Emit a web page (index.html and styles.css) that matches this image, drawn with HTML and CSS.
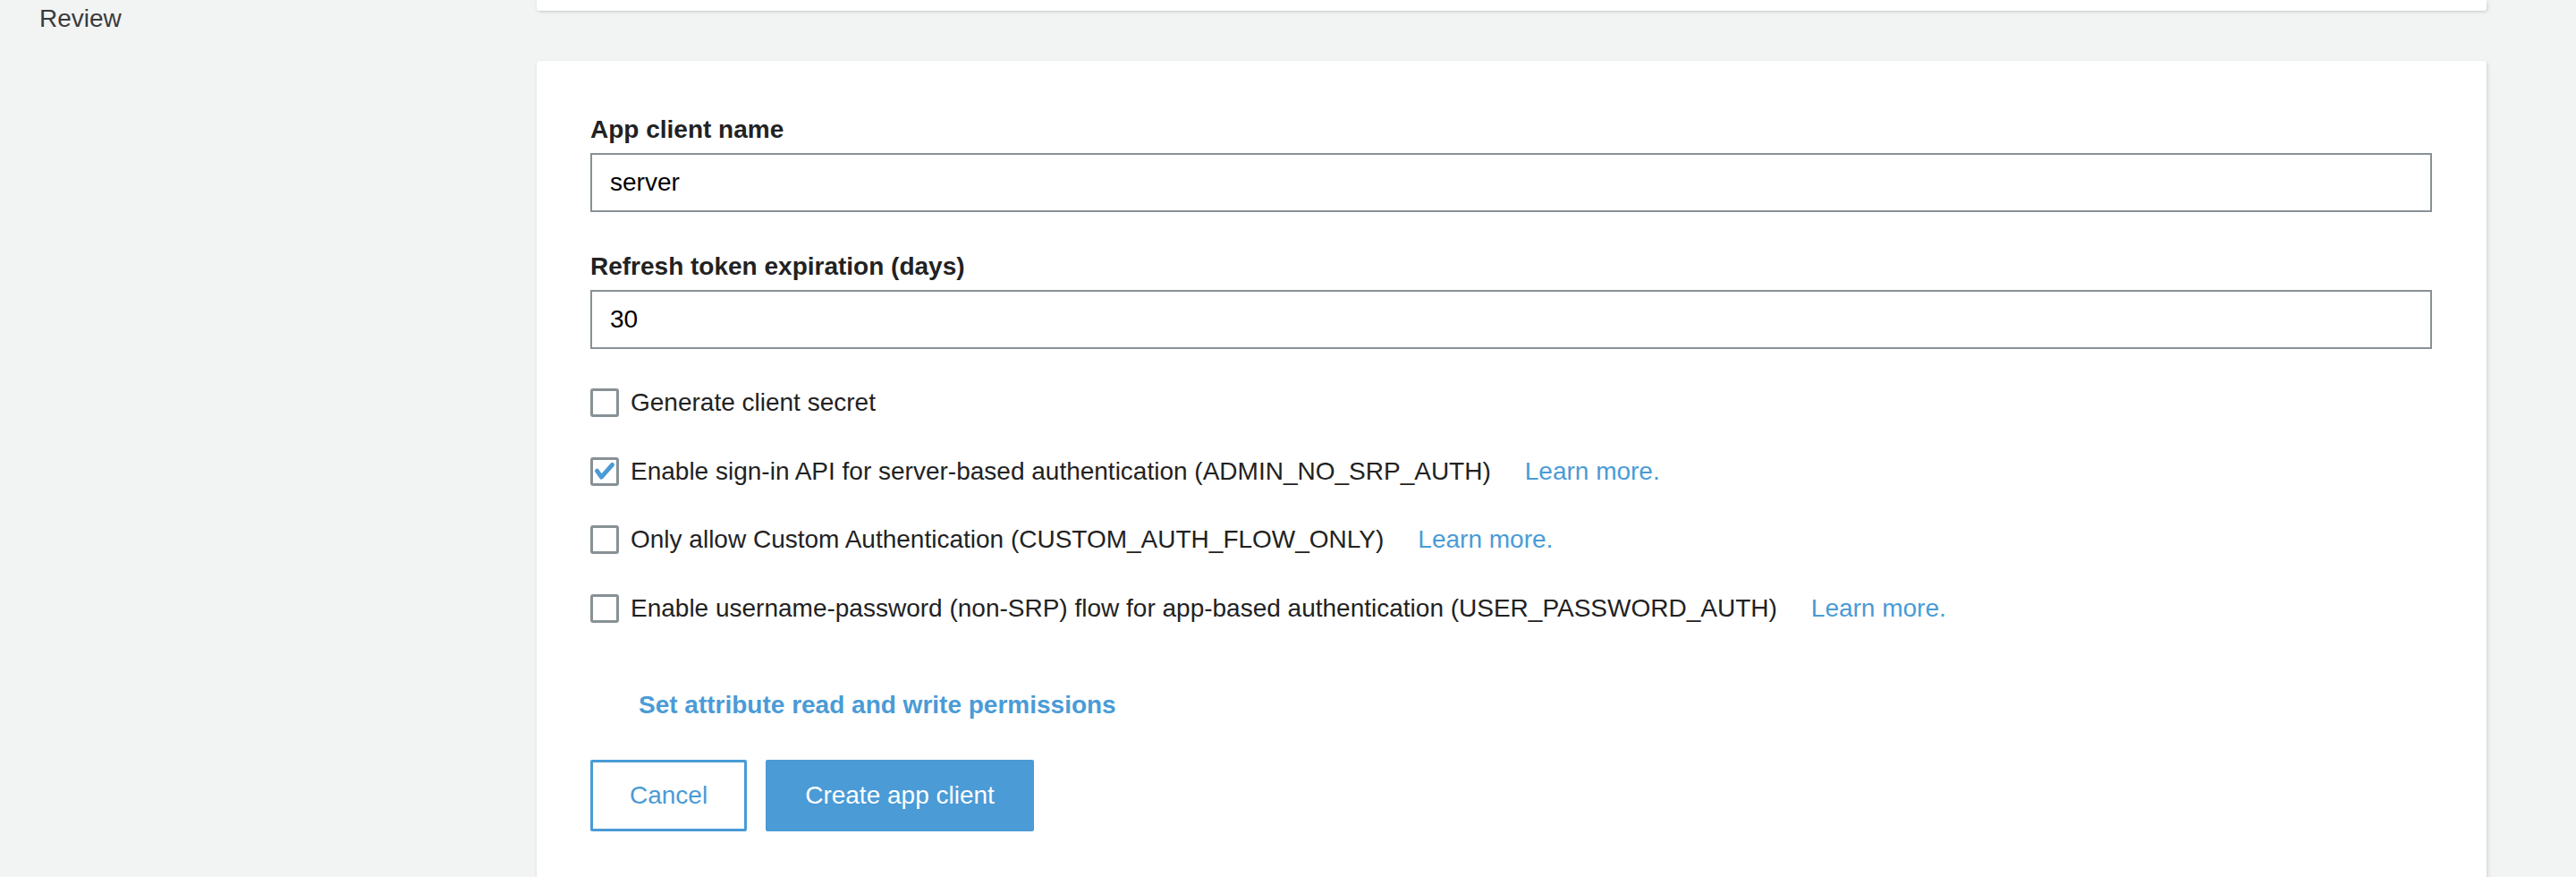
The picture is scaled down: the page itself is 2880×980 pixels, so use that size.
FILE: index.html
```html
<!DOCTYPE html>
<html lang="en">
<head>
<meta charset="utf-8">
<title>App client</title>
<link rel="stylesheet" href="styles.css">
</head>
<body>
<div class="page">
  <nav class="sidebar">
    <div class="nav-item">Review</div>
  </nav>
  <main class="main">
    <div class="card card-top"></div>
    <section class="card card-form">
      <div class="field">
        <label class="field-label">App client name</label>
        <div class="text-input">server</div>
      </div>
      <div class="field">
        <label class="field-label">Refresh token expiration (days)</label>
        <div class="text-input">30</div>
      </div>
      <div class="checks">
        <div class="check-row">
          <span class="checkbox"></span>
          <span class="check-text">Generate client secret</span>
        </div>
        <div class="check-row">
          <span class="checkbox checked">
            <svg viewBox="0 0 32 32" width="30" height="30"><path d="M5.5 15 L11.5 23.5 L26.5 6.5" fill="none" stroke="#4a9bd6" stroke-width="6" stroke-linecap="round" stroke-linejoin="round"/></svg>
          </span>
          <span class="check-text">Enable sign-in API for server-based authentication (ADMIN_NO_SRP_AUTH)</span>
          <a class="learn">Learn more.</a>
        </div>
        <div class="check-row">
          <span class="checkbox"></span>
          <span class="check-text">Only allow Custom Authentication (CUSTOM_AUTH_FLOW_ONLY)</span>
          <a class="learn">Learn more.</a>
        </div>
        <div class="check-row">
          <span class="checkbox"></span>
          <span class="check-text">Enable username-password (non-SRP) flow for app-based authentication (USER_PASSWORD_AUTH)</span>
          <a class="learn">Learn more.</a>
        </div>
      </div>
      <a class="perm-link">Set attribute read and write permissions</a>
      <div class="actions">
        <button class="btn btn-secondary">Cancel</button>
        <button class="btn btn-primary">Create app client</button>
      </div>
    </section>
  </main>
</div>
</body>
</html>
```

FILE: styles.css
```css
* { box-sizing: border-box; }

html, body {
  margin: 0;
  padding: 0;
}

body {
  background: #f2f3f3;
  font-family: "Liberation Sans", Arial, Helvetica, sans-serif;
  font-size: 28px;
  color: #222;
}

.page {
  display: flex;
  align-items: flex-start;
}

.sidebar {
  width: 600px;
  flex: none;
  padding-left: 44px;
  padding-top: 1px;
}

.nav-item {
  line-height: 40px;
  color: #3b3b3b;
}

.main {
  width: 2180px;
  flex: none;
  display: flex;
  flex-direction: column;
  gap: 56px;
}

.card {
  background: #fff;
  border-radius: 3px;
  box-shadow: 0 1px 3px rgba(0, 0, 0, 0.12), 3px 2px 4px rgba(0, 0, 0, 0.06);
}

.card-top {
  height: 12px;
  border-radius: 0 0 3px 3px;
}

.card-form {
  padding: 60px 61px 60px 60px;
}

.field {
  display: flex;
  flex-direction: column;
  margin-bottom: 44px;
}

.field-label {
  font-weight: bold;
  line-height: 34px;
  margin-bottom: 9px;
  color: #222;
}

.text-input {
  height: 66px;
  border: 2px solid #879196;
  padding: 0 20px;
  display: flex;
  align-items: center;
  color: #000;
  line-height: 32px;
}

.checks {
  display: flex;
  flex-direction: column;
  gap: 44.5px;
}

.check-row {
  display: flex;
  align-items: center;
  height: 32px;
}

.checkbox {
  width: 32px;
  height: 32px;
  flex: none;
  border: 3px solid #879196;
  border-radius: 3px;
  background: #fff;
  display: flex;
  align-items: center;
  justify-content: center;
  margin-right: 13px;
}

.checkbox svg { display: block; }

.check-text {
  line-height: 32px;
  color: #222;
  white-space: nowrap;
}

.learn {
  margin-left: 38px;
  color: #4a9bd6;
  line-height: 32px;
  white-space: nowrap;
  cursor: pointer;
}

.perm-link {
  display: block;
  margin-top: 75px;
  margin-left: 54px;
  font-weight: bold;
  color: #4a9bd6;
  line-height: 34px;
  cursor: pointer;
}

.actions {
  display: flex;
  gap: 21px;
  margin-top: 44px;
}

.btn {
  height: 80px;
  padding: 0 41px;
  border: 3px solid #4a9bd6;
  border-radius: 2px;
  font-family: "Liberation Sans", Arial, Helvetica, sans-serif;
  font-size: 28px;
  line-height: 32px;
  cursor: pointer;
}

.btn-secondary {
  background: #fff;
  color: #4a9bd6;
}

.btn-primary {
  background: #4a9bd6;
  color: #fff;
}
```
